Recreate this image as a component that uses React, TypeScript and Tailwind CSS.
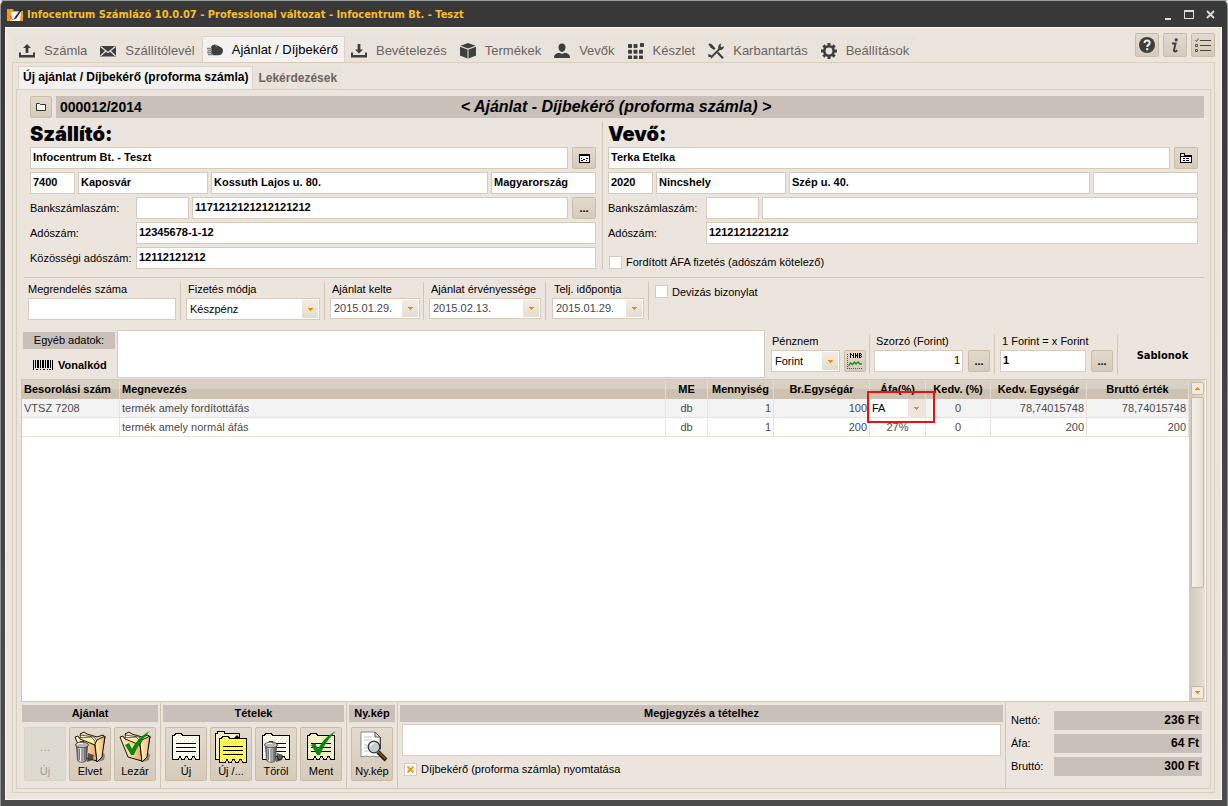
import React from "react";

const field =
  "block min-w-0 h-[22px] border border-[#d6cbbb] bg-white px-[2px] pb-[2px] text-[11px] text-black outline-none rounded-none";
const bevel =
  "flex items-center justify-center border border-[#cbbca6] rounded-[2px] bg-gradient-to-b from-[#e2dacd] to-[#d6cbbb] text-black";
const band = "bg-[#c9c0ba] text-center text-[11px] font-bold leading-[17px] h-[17px]";
const rule = "w-px shrink-0 bg-[#d2c6b3]";

/* ---------- icons ---------- */

function Svg({ children, size = 16 }: { children: React.ReactNode; size?: number }) {
  return (
    <svg width={size} height={size} viewBox="0 0 16 16" fill="#3f3f3f" className="shrink-0" aria-hidden="true">
      {children}
    </svg>
  );
}

const UploadIcon = () => (
  <Svg>
    <path d="M8 1l4 4H9.400v5H6.600V5H4z" />
    <path d="M0 9.500h2V12h12V9.500h2V14.500H0z" />
  </Svg>
);
const DownloadIcon = () => (
  <Svg>
    <path d="M8 10.500l4-4H9.400V1H6.600v5.500H4z" />
    <path d="M0 9.500h2V12h12V9.500h2V14.500H0z" />
  </Svg>
);
const MailIcon = () => (
  <Svg>
    <rect y="3" width="16" height="10.500" />
    <path d="M.5 3.500L8 9.500l7.500-6M.5 13l5.300-5M15.500 13l-5.300-5" stroke="#ece5de" strokeWidth="1.100" fill="none" />
  </Svg>
);
const HandIcon = () => (
  <Svg>
    <path d="M4.500 5c.6-1.800 2-2.600 4-2.400L14 5.300c1.200.8 2 2 2 3.200 0 2.800-1.800 4.800-4.800 4.800-2.500 0-5 .2-6.400-.6z" />
    <path d="M4 4.500h4v8.500H4z" />
    <path d="M0 6.500h5M.5 8.500H5M0 10.500h5M1 12.500h5" stroke="#858585" strokeWidth="1.300" />
    <path d="M8.500 2.700l1 1.800" stroke="#f4f2f0" strokeWidth=".6" fill="none" />
  </Svg>
);
const BoxIcon = () => (
  <Svg>
    <path d="M8 0l7.500 2.700L8 5.400.5 2.700z" />
    <path d="M0 3.800l7.500 2.600V15.500L0 12.500zM16 3.800L8.500 6.400V15.500l7.500-3z" />
  </Svg>
);
const UserIcon = () => (
  <Svg>
    <path d="M8 .5c2.200 0 3.500 1.500 3.500 3.800C11.500 7 10 9 8 9S4.500 7 4.500 4.300C4.500 2 5.800.5 8 .5z" />
    <path d="M0 15c0-3.400 2-4.600 5.200-5.200 1.500 1.300 4.100 1.300 5.600 0C14 10.400 16 11.600 16 15z" />
  </Svg>
);
const GridIcon = () => (
  <Svg>
    {[0, 6, 12].map((y) =>
      [0, 6, 12].map((x) => (
        <rect key={`${x}-${y}`} x={x === 12 && y > 0 ? 11 : x === 6 ? 5.5 : x} y={x === 12 && y === 0 ? 0 : y * 0.95 + 1} width={4} height={4} rx={0.7} />
      ))
    )}
  </Svg>
);
const ToolsIcon = () => (
  <Svg>
    <path d="M3.500 14L12 5.500" stroke="#3f3f3f" strokeWidth="1.800" />
    <path d="M10.500 6C9.800 3.500 10.500 1.200 13.200.3L12.500 3l1 1.200L16 3c0 2.500-2 4.500-4.500 4z" />
    <path d="M.2 11.300c2-.3 4 .7 4 3L3 16l-.5-2L.5 14z" />
    <path d="M1.500.3L4 1.500 7.500 5.500 6 7 2.500 4.500.5 1.500z" />
    <path d="M9.500 9.500l5.500 5.800" stroke="#3f3f3f" strokeWidth="2" />
  </Svg>
);
const GearIcon = () => (
  <Svg>
    <circle cx="8" cy="8" r="4.700" fill="none" stroke="#3f3f3f" strokeWidth="2.600" />
    {[0, 45, 90, 135, 180, 225, 270, 315].map((a) => (
      <rect key={a} x="6.500" y="0" width="3" height="3" transform={`rotate(${a} 8 8)`} />
    ))}
  </Svg>
);

const Caret = ({ up = false }: { up?: boolean }) => (
  <svg width="5" height="3" viewBox="0 0 5 3" shapeRendering="crispEdges" aria-hidden="true">
    <path d={up ? "M2 0h1v1H2zM1 1h3v1H1zM0 2h5v1H0z" : "M0 0h5v1H0zM1 1h3v1H1zM2 2h1v1H2z"} fill="#ff8400" />
  </svg>
);

const SmallFolder = () => (
  <svg width="12" height="10" viewBox="0 0 12 10" aria-hidden="true">
    <path d="M1.500 8.500v-7h3l1 1h5v6z" fill="#fafafa" stroke="#333" />
  </svg>
);
const CardIcon = () => (
  <svg width="11" height="9" viewBox="0 0 11 9" shapeRendering="crispEdges" aria-hidden="true">
    <path d="M.5.500h10v8H.5z" fill="#fff" stroke="#000" />
    <path d="M0 0h11v2H0zM2 4h1v1H2zM4 5h2v1H4zM7 4h2v1H7zM2 6h2v1H2zM7 6h1v1H7z" />
  </svg>
);
const CardFolderIcon = () => (
  <svg width="12" height="10" viewBox="0 0 12 10" shapeRendering="crispEdges" aria-hidden="true">
    <path d="M.5 9.500v-9h4v2h7v7z" fill="#fff" stroke="#000" />
    <path d="M1 1h3v2H1z" fill="#ff0" />
    <path d="M1 3h10v1H1zM3 5h2v1H3zM6 5h3v1H6zM3 7h2v1H3zM6 7h3v1H6z" />
  </svg>
);
const ChartIcon = () => (
  <svg width="16" height="17" viewBox="0 0 16 17" aria-hidden="true">
    <g shapeRendering="crispEdges">
      <path d="M3 0h1v5H3zM4 1h1v1H4zM5 2h1v1H5zM6 0h1v5H6zM8 0h1v5H8zM9 2h1v1H9zM10 0h1v5h-1zM12 0h1v5h-1zM13 0h1v1h-1zM13 2h1v1h-1zM13 4h1v1h-1zM14 1h1v1h-1zM14 3h1v1h-1z" />
      <path d="M.5 1v15.500M0 15.500h15" stroke="#555" strokeDasharray="1 1" />
    </g>
    <path d="M1.500 13l2-3 2 1.500 2-2.500L9 11l2-2 2 2h2" stroke="#1a8a1a" strokeWidth="1.300" fill="none" />
  </svg>
);
const Barcode = () => (
  <svg width="20" height="10" viewBox="0 0 20 10" shapeRendering="crispEdges" aria-hidden="true">
    <path d="M0 0h1v10H0zM2 0h1v8H2zM4 0h2v8H4zM7 0h1v8H7zM9 0h2v8H9zM12 0h1v8h-1zM14 0h2v8h-2zM17 0h1v8h-1zM19 0h1v10h-1zM3 9h2v1H3zM7 9h1v1H7zM10 9h2v1h-2zM14 9h1v1h-1zM16 9h2v1h-2z" />
  </svg>
);

const Art = ({ children }: { children: React.ReactNode }) => (
  <svg width="32" height="32" viewBox="0 0 32 32" className="shrink-0" aria-hidden="true">
    <defs>
      <pattern id="pale" width="4" height="4" patternUnits="userSpaceOnUse">
        <rect width="4" height="4" fill="#fffef0" />
        <path d="M0 0h1v1H0zM2 2h1v1H2z" fill="#ffe94a" />
      </pattern>
      <pattern id="dots" width="2" height="2" patternUnits="userSpaceOnUse">
        <rect width="2" height="2" fill="#fff24a" />
        <path d="M0 0h1v1H0zM1 1h1v1H1z" fill="#fffbd0" />
      </pattern>
      <linearGradient id="metal">
        <stop offset="0" stopColor="#555" />
        <stop offset=".35" stopColor="#f2f2f2" />
        <stop offset="1" stopColor="#4a4a4a" />
      </linearGradient>
      <linearGradient id="folder">
        <stop offset="0" stopColor="#fff0b0" />
        <stop offset=".6" stopColor="#f8cf9c" />
        <stop offset="1" stopColor="#e0a468" />
      </linearGradient>
    </defs>
    {children}
  </svg>
);
const Folder = () => (
  <g stroke="#000" strokeWidth=".9" strokeLinejoin="round">
    <path d="M27 19l4 5-1 5-6 2z" fill="#8a8177" stroke="none" />
    <path d="M6 3l4-2 3 2 10 3 6-2 2 2-4 20-8 0z" fill="#f8d9a8" />
    <path d="M6 4l14 2 3 4 1 18-12-3z" fill="#fff" strokeWidth=".6" />
    <path d="M3 7l14-1 4 4 2 20-13-5z" fill="#fff39a" strokeWidth=".6" />
    <path d="M1 6l3-1 2 3 10 4 5 2 2 16L9 26z" fill="url(#folder)" />
    <path d="M21 13l2-4 8-4-3 21-5 5z" fill="url(#folder)" />
  </g>
);
const Trash = ({ x = 0 }: { x?: number }) => (
  <g transform={`translate(${x} 0)`}>
    <path d="M14 22l6 2-1 5-6 2z" fill="#333" opacity=".8" />
    <path d="M2.500 15h11l-1 14c-1 3-8 3-9 0z" fill="url(#metal)" stroke="#444" strokeWidth=".8" />
    <path d="M5.500 18v11M8 18v12M10.500 18v11" stroke="#777" />
    <ellipse cx="8" cy="14" rx="6.500" ry="2.800" fill="#b8b8b8" stroke="#333" strokeWidth=".8" />
    <path d="M6 11.500v-1h4v1" fill="none" stroke="#333" />
    <path d="M3 13.500c2-1.500 4-1.500 6-1" stroke="#fff" fill="none" />
  </g>
);
const Check = () => (
  <path d="M6 14l4-2 3 6C17 10 23 4 31 0 25 6 19 14 15 24h-3C10 20 8 17 6 14z" fill="#078a07" />
);
const Sheet = ({ fill = "url(#dots)", x = 0, y = 0 }: { fill?: string; x?: number; y?: number }) => (
  <g transform={`translate(${x} ${y})`} shapeRendering="crispEdges">
    <path
      d="M2.500 28.500V4.500h2l1-2h6l1 2h17v24h-4l-1-3h-2l-1 3h-3l-1-3h-2l-1 3h-3l-1-3H9.500l-1 3z"
      fill={fill}
      stroke="#000"
    />
    <path d="M6 12.500h20M6 16.500h20M6 20.500h20" stroke="#000" />
  </g>
);
const DiscardArt = () => (
  <Art>
    <Folder />
    <Trash />
  </Art>
);
const CloseArt = () => (
  <Art>
    <Folder />
    <Check />
  </Art>
);
const SheetArt = () => (
  <Art>
    <Sheet fill="url(#pale)" />
  </Art>
);
const CopyArt = () => (
  <Art>
    <g shapeRendering="crispEdges">
      <path d="M.5 28.500v-26h2v-2h7v2h15v26z" fill="url(#dots)" stroke="#000" />
    </g>
    <Sheet x={2} y={3} />
    <path d="M19 7l3-3 3 3z" />
  </Art>
);
const DeleteArt = () => (
  <Art>
    <Sheet fill="url(#pale)" />
    <Trash x={3} />
  </Art>
);
const SaveArt = () => (
  <Art>
    <Sheet />
    <Check />
  </Art>
);
const PreviewArt = () => (
  <Art>
    <path d="M5 1h14l5 5v19l-3 1-4-1-3 1-4-1-5 1z" fill="#fff" stroke="#888" />
    <path d="M19 1v5h5z" fill="#ddd" stroke="#555" />
    <path d="M24.500 6v12" stroke="#444" fill="none" />
    <path d="M8 6h8M8 9h7M8 14h3M8 17h3M8 20h4" stroke="#c4c4c4" />
    <path d="M22 21l8 8" stroke="#2a1505" strokeWidth="4" />
    <path d="M22.500 21l7 7" stroke="#9a5a28" strokeWidth="1.300" />
    <circle cx="18" cy="16" r="5.800" fill="#c5cdd2" stroke="#333" strokeWidth="1.300" />
    <path d="M14.500 15c.5-2 2-2.700 4-2.700" stroke="#fff" strokeWidth="1.500" fill="none" />
  </Art>
);

/* ---------- shared controls ---------- */

function Text({ label, value, className = "" }: { label: string; value?: string; className?: string }) {
  return <input aria-label={label} defaultValue={value} className={`${field} font-bold ${className}`} />;
}

function Drop({ id, value, className = "" }: { id: string; value: string; className?: string }) {
  return (
    <div className={`relative ${className}`}>
      <select
        id={id}
        defaultValue={value}
        className="block h-full w-full appearance-none rounded-none border border-[#d6cbbb] bg-white px-[3px] pb-px text-[11px] outline-none"
      >
        <option>{value}</option>
      </select>
      <span className="pointer-events-none absolute top-[2px] right-[2px] bottom-[2px] flex w-4 items-center justify-center bg-gradient-to-b from-[#f2ece6] to-[#e4ddcf]">
        <Caret />
      </span>
    </div>
  );
}

function DropField({ id, label, value, className = "" }: { id: string; label: string; value: string; className?: string }) {
  return (
    <div className="flex flex-col">
      <label htmlFor={id} className="h-4 pl-[2px] leading-[14px] whitespace-nowrap">
        {label}
      </label>
      <Drop id={id} value={value} className={className} />
    </div>
  );
}

function ToolButton({ icon, label, disabled = false }: { icon: React.ReactNode; label: string; disabled?: boolean }) {
  return (
    <button
      disabled={disabled}
      className={
        disabled
          ? "flex h-[54px] w-[42px] flex-col items-center justify-end rounded-[2px] border border-[#d9d3c6] bg-[#dedad1] pb-px text-[11px] text-[#a29e97]"
          : "flex h-[54px] w-[42px] flex-col items-center justify-end rounded-[2px] border border-[#cbbca6] bg-gradient-to-b from-[#e2dacd] to-[#d6cbbb] pb-px text-[11px] text-black"
      }
    >
      {icon}
      <span className="leading-[16px]">{label}</span>
    </button>
  );
}

/* ---------- page ---------- */

const mainTabs = [
  { label: "Számla", icon: <UploadIcon /> },
  { label: "Szállítólevél", icon: <MailIcon /> },
  { label: "Ajánlat / Díjbekérő", icon: <HandIcon />, active: true },
  { label: "Bevételezés", icon: <DownloadIcon /> },
  { label: "Termékek", icon: <BoxIcon /> },
  { label: "Vevők", icon: <UserIcon /> },
  { label: "Készlet", icon: <GridIcon /> },
  { label: "Karbantartás", icon: <ToolsIcon /> },
  { label: "Beállítások", icon: <GearIcon /> },
];

const columns = [
  { title: "Besorolási szám", width: "w-[98px]" },
  { title: "Megnevezés", width: "" },
  { title: "ME", width: "w-[42px]" },
  { title: "Mennyiség", width: "w-[66px]" },
  { title: "Br.Egységár", width: "w-[96px]" },
  { title: "Áfa(%)", width: "w-[56px]" },
  { title: "Kedv. (%)", width: "w-[65px]" },
  { title: "Kedv. Egységár", width: "w-[96px]" },
  { title: "Bruttó érték", width: "w-[102px]" },
];

const rows = [
  ["VTSZ 7208", "termék amely fordítottáfás", "db", "1", "100", "FA", "0", "78,74015748", "78,74015748"],
  ["", "termék amely normál áfás", "db", "1", "200", "27%", "0", "200", "200"],
];

const alignOf = (i: number) =>
  i < 2 ? "text-left" : i === 2 || i === 5 || i === 6 ? "text-center" : "text-right";

function TitleBar() {
  return (
    <header className="flex h-[27px] shrink-0 items-center justify-between border-t border-[#9da39f] pt-px pr-3 pl-[6px]">
      <div className="flex items-center gap-1">
        <svg width="16" height="14" viewBox="0 0 16 14" aria-hidden="true">
          <path d="M0 1h6l1 2h9v10H0z" fill="#f39a1f" />
          <path d="M4 4h10l-1 9H4z" fill="#f6f6f6" />
          <path d="M14 1L8 9l-1.500 3L9.500 10 15 2z" fill="#222" />
          <path d="M3 8l3 4" stroke="#c33" />
        </svg>
        <h1 className="font-['DejaVu_Sans_Condensed','DejaVu_Sans',sans-serif] text-[11px] font-bold text-[#f9bd2b]">
          Infocentrum Számlázó 10.0.07 - Professional változat - Infocentrum Bt. - Teszt
        </h1>
      </div>
      <div className="flex items-center gap-3">
        <button aria-label="Kis méret">
          <svg width="7" height="10" viewBox="0 0 7 10">
            <path d="M0 8h6v2H0z" fill="#ddd" />
          </svg>
        </button>
        <button aria-label="Teljes méret">
          <svg width="10" height="9" viewBox="0 0 10 9" shapeRendering="crispEdges">
            <path d="M.5 1v7.500h9V1" fill="none" stroke="#ddd" />
            <path d="M0 0h10v2H0z" fill="#ddd" />
          </svg>
        </button>
        <button aria-label="Bezárás">
          <svg width="9" height="9" viewBox="0 0 9 9">
            <path d="M1 1l7 7M8 1L1 8" stroke="#ddd" strokeWidth="1.800" />
          </svg>
        </button>
      </div>
    </header>
  );
}

function MainNav() {
  return (
    <div className="flex h-[34px] items-end justify-between pl-px">
      <nav className="flex h-[26px] items-stretch">
        {mainTabs.map((t) => (
          <button
            key={t.label}
            className={
              t.active
                ? "relative -mb-px flex items-center gap-[9px] border border-[#ddd3c6] border-b-[#d6cbbb] bg-[#f4f2f0] pt-px pr-[6px] pl-1 text-[13px] whitespace-nowrap text-black"
                : "flex items-center gap-[9px] bg-[#eae3dc] pt-1 pr-[7px] pl-[6px] text-[13px] whitespace-nowrap text-[#6a6561]"
            }
          >
            {t.icon}
            {t.label}
          </button>
        ))}
      </nav>
      <div className="flex gap-1 pb-[5px]">
        <button aria-label="Súgó" className={`${bevel} size-6`}>
          <svg width="16" height="16" viewBox="0 0 16 16" aria-hidden="true">
            <circle cx="8" cy="8" r="8" fill="#3f3f3f" />
            <path d="M5.500 6c0-3.400 5.200-3.400 5.200-.2C10.700 8 8.200 7.800 8.200 10" stroke="#eee" strokeWidth="2" fill="none" />
            <path d="M7.100 11.200h2.200v2H7.100z" fill="#eee" />
          </svg>
        </button>
        <button aria-label="Információ" className={`${bevel} size-6`}>
          <svg width="8" height="15" viewBox="0 0 8 15" aria-hidden="true">
            <circle cx="5.200" cy="1.800" r="1.600" fill="#3f3f3f" />
            <path d="M1 5.500h3.600L3 12c-.2 1.800 1.500 2 3.200.2" stroke="#3f3f3f" strokeWidth="1.900" fill="none" />
          </svg>
        </button>
        <button aria-label="Lista" className={`${bevel} size-6`}>
          <svg width="16" height="14" viewBox="0 0 16 14" aria-hidden="true">
            <path d="M5 2.500h11M5 7.500h11M5 12.500h11" stroke="#444" strokeWidth="1.200" />
            <path d="M.5 2l1 1.500L3.500.500M.5 6.500h2v2h-2zM.5 11.500h2v2h-2z" stroke="#555" fill="none" />
          </svg>
        </button>
      </div>
    </div>
  );
}

function Parties() {
  return (
    <section className="mr-3 ml-[13px] grid grid-cols-[566fr_596fr] gap-x-[6px] pt-1 pb-2">
      <div className="flex flex-col gap-[3px]">
        <h2 className="h-[22px] font-[Inter,sans-serif] text-[20px] leading-[24px] font-black">Szállító:</h2>
        <div className="flex gap-1">
          <Text label="Szállító neve" value="Infocentrum Bt. - Teszt" className="flex-1" />
          <button aria-label="Szállító adatlap" className={`${bevel} h-[22px] w-6`}>
            <CardIcon />
          </button>
        </div>
        <div className="flex gap-[3px]">
          <Text label="Szállító irányítószám" value="7400" className="w-[45px]" />
          <Text label="Szállító város" value="Kaposvár" className="w-[130px]" />
          <Text label="Szállító utca" value="Kossuth Lajos u. 80." className="flex-1" />
          <Text label="Szállító ország" value="Magyarország" className="w-[105px]" />
        </div>
        <div className="flex items-center">
          <label htmlFor="sBank" className="w-[106px]">Bankszámlaszám:</label>
          <Text label="Bank előtag" className="mr-[3px] w-[53px]" />
          <input id="sBank" defaultValue="1171212121212121212" className={`${field} mr-1 flex-1 font-bold`} />
          <button className={`${bevel} h-[22px] w-6 text-[11px] font-bold`}>...</button>
        </div>
        <div className="flex items-center">
          <label htmlFor="sTax" className="w-[106px]">Adószám:</label>
          <input id="sTax" defaultValue="12345678-1-12" className={`${field} flex-1 font-bold`} />
        </div>
        <div className="flex items-center">
          <label htmlFor="sEu" className="w-[106px] whitespace-nowrap">Közösségi adószám:</label>
          <input id="sEu" defaultValue="12112121212" className={`${field} flex-1 font-bold`} />
        </div>
      </div>
      <div className="flex flex-col gap-[3px] border-l border-[#d2c6b3] pl-[5px]">
        <h2 className="h-[22px] font-[Inter,sans-serif] text-[20px] leading-[24px] font-black">Vevő:</h2>
        <div className="flex gap-1">
          <Text label="Vevő neve" value="Terka Etelka" className="flex-1" />
          <button aria-label="Vevő adatlap" className={`${bevel} h-[22px] w-6`}>
            <CardFolderIcon />
          </button>
        </div>
        <div className="flex gap-[3px]">
          <Text label="Vevő irányítószám" value="2020" className="w-[45px]" />
          <Text label="Vevő város" value="Nincshely" className="w-[130px]" />
          <Text label="Vevő utca" value="Szép u. 40." className="flex-1" />
          <Text label="Vevő ország" className="w-[105px]" />
        </div>
        <div className="flex items-center">
          <label htmlFor="vBank" className="w-[98px]">Bankszámlaszám:</label>
          <Text label="Vevő bank előtag" className="mr-[3px] w-[53px]" />
          <input id="vBank" className={`${field} flex-1 font-bold`} />
        </div>
        <div className="flex items-center">
          <label htmlFor="vTax" className="w-[98px]">Adószám:</label>
          <input id="vTax" defaultValue="1212121221212" className={`${field} flex-1 font-bold`} />
        </div>
        <label className="mt-2 flex items-center gap-1 pl-px">
          <input type="checkbox" className="size-[13px] appearance-none border border-[#d6cbbb] bg-white" />
          Fordított ÁFA fizetés (adószám kötelező)
        </label>
      </div>
    </section>
  );
}

function Dates() {
  return (
    <section className="mr-[6px] ml-[7px] flex border-t border-[#d2c6b3] pt-1 pb-[10px]">
      <div className="ml-1 flex flex-col pr-1">
        <label htmlFor="order" className="h-4 leading-[14px]">Megrendelés száma</label>
        <input id="order" className={`${field} w-[148px]`} />
      </div>
      <span className={rule} />
      <div className="pr-1 pl-[5px]">
        <DropField id="pay" label="Fizetés módja" value="Készpénz" className="h-[22px] w-[134px]" />
      </div>
      <span className={rule} />
      <div className="pr-[3px] pl-[5px]">
        <DropField id="issued" label="Ajánlat kelte" value="2015.01.29." className="h-[21px] w-[90px] text-[#444]" />
      </div>
      <span className={rule} />
      <div className="pr-1 pl-[5px]">
        <DropField id="valid" label="Ajánlat érvényessége" value="2015.02.13." className="h-[21px] w-[112px] text-[#444]" />
      </div>
      <span className={rule} />
      <div className="pr-1 pl-[6px]">
        <DropField id="done" label="Telj. időpontja" value="2015.01.29." className="h-[21px] w-[92px] text-[#444]" />
      </div>
      <span className={rule} />
      <label className="mt-[3px] flex h-[13px] items-center gap-1 pl-[6px]">
        <input type="checkbox" className="size-[13px] appearance-none border border-[#d6cbbb] bg-white" />
        Devizás bizonylat
      </label>
    </section>
  );
}

function Extras() {
  return (
    <section className="mr-[6px] ml-[6px] flex h-[48px]">
      <div className="w-[92px] pt-[2px]">
        <label htmlFor="other" className="block h-[17px] bg-[#c9c0ba] text-center leading-[17px]">
          Egyéb adatok:
        </label>
        <button className="mt-[9px] ml-[10px] flex items-center gap-[5px] text-[11px] font-bold">
          <Barcode />
          Vonalkód
        </button>
      </div>
      <textarea id="other" className="ml-[2px] block flex-1 resize-none border border-[#d6cbbb] bg-white p-1 outline-none" />
      <div className="flex pt-1 pb-1 pl-[6px]">
        <div className="pr-[3px]">
          <label htmlFor="currency" className="block h-4 pl-px leading-[14px]">Pénznem</label>
          <div className="flex gap-1">
            <Drop id="currency" value="Forint" className="h-[22px] w-[69px]" />
            <button aria-label="MNB árfolyam" className={`${bevel} size-[22px]`}>
              <ChartIcon />
            </button>
          </div>
        </div>
        <span className={rule} />
        <div className="px-1">
          <label htmlFor="multi" className="block h-4 pl-[2px] leading-[14px]">Szorzó (Forint)</label>
          <div className="flex gap-[5px]">
            <input id="multi" defaultValue="1" className={`${field} w-[89px] text-right`} />
            <button className={`${bevel} size-[22px] text-[11px] font-bold`}>...</button>
          </div>
        </div>
        <span className={rule} />
        <div className="pr-1 pl-[5px]">
          <label htmlFor="rate" className="block h-4 pl-[2px] leading-[14px]">1 Forint = x Forint</label>
          <div className="flex gap-[5px]">
            <input id="rate" defaultValue="1" className={`${field} w-[86px] font-bold`} />
            <button className={`${bevel} size-[22px] text-[11px] font-bold`}>...</button>
          </div>
        </div>
        <span className={rule} />
        <button className="w-[86px] pt-1 pl-[3px] font-['DejaVu_Sans_Condensed','DejaVu_Sans',sans-serif] text-[11px] font-bold">
          Sablonok
        </button>
      </div>
    </section>
  );
}

function Items() {
  return (
    <section className="mr-[3px] ml-1 mt-px flex min-h-[200px] flex-1 border border-[#d2c6b3] bg-white">
      <div className="min-w-0 flex-1">
        <table className="w-full table-fixed border-separate border-spacing-0">
          <thead>
            <tr>
              {columns.map((c, i) => (
                <th
                  key={c.title}
                  className={`${c.width} ${i < 2 ? "text-left" : "text-center"} h-[19px] border-r border-[#e3dcd2] bg-linear-to-b from-[#d9d0c4] from-50% to-[#cdc2b2] to-50% px-[2px] pb-px text-[11px] leading-[18px] font-bold whitespace-nowrap`}
                >
                  {c.title}
                </th>
              ))}
            </tr>
          </thead>
          <tbody className="text-[#4a4a4a]">
            {rows.map((r, ri) => (
              <tr key={ri} className={ri === 0 ? "bg-[#f3f3f3]" : "bg-white"}>
                {r.map((v, i) =>
                  v === "FA" ? (
                    <td key={i} className="relative h-[19px] border-r border-b border-[#e9e2d6] bg-white p-0">
                      <select aria-label="Áfa" className="block h-[18px] w-full appearance-none pl-[2px] text-black outline-none">
                        <option>FA</option>
                      </select>
                      <span className="pointer-events-none absolute top-0 right-0 flex h-[18px] w-[17px] items-center justify-center bg-[#ece6df]">
                        <Caret />
                      </span>
                      <span className="pointer-events-none absolute -top-2 -left-[3px] z-10 h-8 w-[68px] border-2 border-[#ee1010]" />
                    </td>
                  ) : (
                    <td key={i} className={`${alignOf(i)} h-[19px] border-r border-b border-[#e9e2d6] px-[2px] leading-[18px]`}>
                      {v}
                    </td>
                  )
                )}
              </tr>
            ))}
          </tbody>
        </table>
      </div>
      <div className="mr-px flex w-4 flex-col items-center gap-[2px] bg-gradient-to-r from-[#d3c9bb] to-[#e6dfd4] py-[2px]">
        <button aria-label="Fel" className="flex h-[13px] w-[13px] items-center justify-center rounded-[2px] border border-[#c6b8a3] bg-[#f1ebe3]">
          <Caret up />
        </button>
        <span className="h-[191px] w-[13px] rounded-[2px] border border-[#c6b8a3] bg-gradient-to-r from-[#f6f1eb] to-[#e6dfd4]" />
        <button aria-label="Le" className="mt-auto flex h-[13px] w-[13px] items-center justify-center rounded-[2px] border border-[#c6b8a3] bg-[#f1ebe3]">
          <Caret />
        </button>
      </div>
    </section>
  );
}

function Footer() {
  return (
    <section className="mr-2 ml-[5px] flex h-[86px] shrink-0 pt-px">
      <div className="w-[136px] pt-[2px]">
        <h3 className={band}>Ajánlat</h3>
        <div className="mt-[5px] flex gap-[3px] pl-[2px]">
          <ToolButton disabled label="Új" icon={<span className="mb-[10px] text-[13px] leading-none">...</span>} />
          <ToolButton label="Elvet" icon={<DiscardArt />} />
          <ToolButton label="Lezár" icon={<CloseArt />} />
        </div>
      </div>
      <span className={`${rule} mr-[2px] ml-[2px]`} />
      <div className="w-[181px] pt-[2px]">
        <h3 className={band}>Tételek</h3>
        <div className="mt-[5px] flex gap-[3px] pl-[2px]">
          <ToolButton label="Új" icon={<SheetArt />} />
          <ToolButton label="Új /..." icon={<CopyArt />} />
          <ToolButton label="Töröl" icon={<DeleteArt />} />
          <ToolButton label="Ment" icon={<SaveArt />} />
        </div>
      </div>
      <span className={`${rule} mr-[2px] ml-[2px]`} />
      <div className="w-[46px] pt-[2px]">
        <h3 className={band}>Ny.kép</h3>
        <div className="mt-[5px] flex pl-[2px]">
          <ToolButton label="Ny.kép" icon={<PreviewArt />} />
        </div>
      </div>
      <span className={`${rule} mr-[2px] ml-[2px]`} />
      <div className="min-w-0 flex-1 pt-[2px]">
        <h3 className={band}>
          <label htmlFor="note">Megjegyzés a tételhez</label>
        </h3>
        <div className="pt-[2px] pr-[2px] pl-[2px]">
          <textarea id="note" className="block h-8 w-full resize-none border border-[#d6cbbb] bg-white p-1 outline-none" />
        </div>
        <label className="mt-[6px] flex items-center gap-1 pl-1">
          <span className="relative flex size-[13px]">
            <input type="checkbox" defaultChecked className="size-[13px] appearance-none border border-[#d6cbbb] bg-white" />
            <svg className="pointer-events-none absolute inset-0" width="13" height="13" viewBox="0 0 13 13" aria-hidden="true">
              <path d="M3.500 3.500l6 6M9.500 3.500l-6 6" stroke="#f39322" strokeWidth="1.800" />
            </svg>
          </span>
          Díjbekérő (proforma számla) nyomtatása
        </label>
      </div>
      <span className={`${rule} ml-[2px]`} />
      <dl className="grid w-[196px] grid-cols-[43px_1fr] content-start gap-y-1 pt-2 pl-[5px]">
        {[
          ["Nettó:", "236 Ft"],
          ["Áfa:", "64 Ft"],
          ["Bruttó:", "300 Ft"],
        ].map(([k, v]) => (
          <React.Fragment key={k}>
            <dt className="leading-[19px]">{k}</dt>
            <dd className="h-[19px] bg-[#c9c0ba] pr-[3px] text-right text-[12px] leading-[19px] font-bold">{v}</dd>
          </React.Fragment>
        ))}
      </dl>
    </section>
  );
}

export default function App() {
  return (
    <div className="flex min-h-screen flex-col rounded-t-md border-x border-x-[#8d918e] bg-[#3a3a3a] bg-linear-to-b from-[#383838] to-[#4c4c4c] pb-[6px] font-['Liberation_Sans',Arial,sans-serif] text-[11px] leading-[14px] text-black">
      <TitleBar />
      <main className="mr-[5px] ml-1 flex flex-1 flex-col border border-[#f7f5f0] bg-[#ece5de] px-[6px] pb-[6px] shadow-[inset_-5px_0_0_#eae6db]">
        <MainNav />
        <div className="flex flex-1 flex-col border border-[#d9cfc0] px-[3px] pt-[3px] pb-[3px]">
          <div className="flex h-[23px] pl-[2px]">
            <button className="relative z-10 -mb-px border border-[#ddd3c6] bg-[#f4f2f0] px-[4px] pb-[2px] text-[12px] font-bold whitespace-nowrap">
              Új ajánlat / Díjbekérő (proforma számla)
            </button>
            <button className="bg-[#eae3dc] px-[5px] text-[12px] font-bold text-[#6a6561]">Lekérdezések</button>
          </div>
          <div className="flex flex-1 flex-col border border-[#d9cfc0]">
            <div className="mt-[6px] mr-[6px] ml-[13px] flex gap-1">
              <button aria-label="Megnyitás" className={`${bevel} size-[22px]`}>
                <SmallFolder />
              </button>
              <div className="grid flex-1 grid-cols-[1fr_auto_1fr] items-center bg-[#c9c0ba] pr-8 pl-1">
                <strong className="text-[14px]">000012/2014</strong>
                <h2 className="text-[16px] font-bold italic">&lt; Ajánlat - Díjbekérő (proforma számla) &gt;</h2>
                <span />
              </div>
            </div>
            <Parties />
            <Dates />
            <Extras />
            <Items />
            <Footer />
          </div>
        </div>
      </main>
    </div>
  );
}
